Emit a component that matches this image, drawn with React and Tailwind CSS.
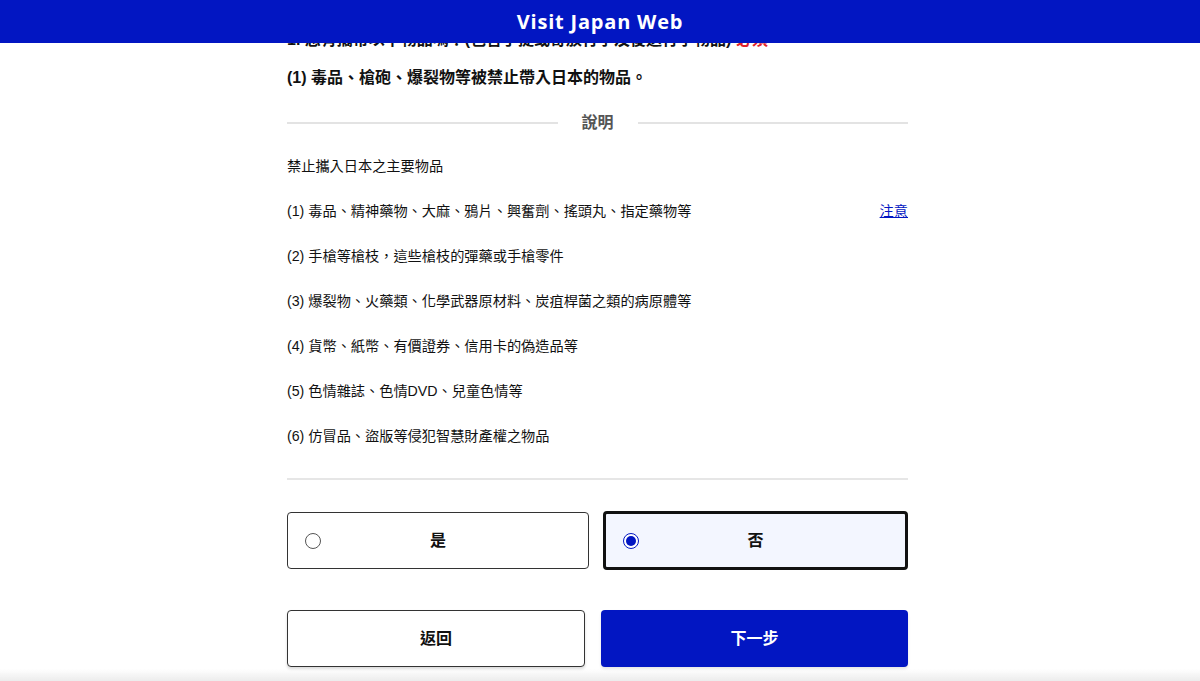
export default function App() {
  const items = [
    "(2) 手槍等槍枝，這些槍枝的彈藥或手槍零件",
    "(3) 爆裂物、火藥類、化學武器原材料、炭疽桿菌之類的病原體等",
    "(4) 貨幣、紙幣、有價證券、信用卡的偽造品等",
    "(5) 色情雜誌、色情DVD、兒童色情等",
    "(6) 仿冒品、盜版等侵犯智慧財產權之物品",
  ];
  const font = { fontFamily: '"Liberation Sans", "Noto Sans CJK TC", sans-serif' };
  return (
    <div className="relative min-h-[681px] bg-white text-[#111]" style={font}>
      <header className="fixed top-0 inset-x-0 z-10 h-[43px] bg-[#0216c2] flex items-center justify-center">
        <span className="text-white text-[20px] font-bold tracking-[0.8px]" style={{ fontFamily: '"Open Sans", sans-serif' }}>
          Visit Japan Web
        </span>
      </header>
      <main className="ml-[287px] w-[621px] pt-[28px] pb-[14px]">
        <p className="h-[24px] leading-[24px] text-[16px] font-bold">
          1. 您有攜帶以下物品嗎？(包含手提或寄放行李及後送行李物品) <span className="text-[#e0202a]">必須</span>
        </p>
        <h2 className="mt-[14px] h-[24px] leading-[24px] text-[16px] font-bold">
          (1) 毒品、槍砲、爆裂物等被禁止帶入日本的物品。
        </h2>
        <div className="mt-[21px] h-[24px] flex items-center">
          <div className="flex-1 h-[2px] bg-[#e3e3e3]" />
          <span className="px-[24px] text-[16px] font-bold text-[#555] leading-[24px]">說明</span>
          <div className="flex-1 h-[2px] bg-[#e3e3e3]" />
        </div>
        <div className="mt-[9px] text-[14.2px]">
          <div className="h-[45px] flex items-center">禁止攜入日本之主要物品</div>
          <div className="h-[45px] flex items-center justify-between">
            <span>(1) 毒品、精神藥物、大麻、鴉片、興奮劑、搖頭丸、指定藥物等</span>
            <a className="text-[#0216c2] underline">注意</a>
          </div>
          {items.map((t) => (
            <div key={t} className="h-[45px] flex items-center">{t}</div>
          ))}
        </div>
        <div className="mt-[19px] h-[2px] bg-[#e6e6e6]" />
        <div className="mt-[32px] flex justify-between">
          <div className="w-[302px] h-[57px] rounded-[4px] border border-[#333] bg-white flex items-center relative">
            <span className="absolute left-[17px] w-[16px] h-[16px] rounded-full border border-[#555] bg-white" />
            <span className="flex-1 text-center text-[16px] font-bold">是</span>
          </div>
          <div className="w-[305px] h-[59px] -mt-[1px] rounded-[4px] border-[3px] border-[#111] bg-[#f3f6ff] flex items-center relative">
            <span className="absolute left-[17px] w-[16px] h-[16px] rounded-full border border-[#0216c2] bg-white flex items-center justify-center">
              <span className="w-[10px] h-[10px] rounded-full bg-[#0216c2]" />
            </span>
            <span className="flex-1 text-center text-[16px] font-bold">否</span>
          </div>
        </div>
        <div className="mt-[40px] flex justify-between">
          <button className="w-[298px] h-[57px] rounded-[4px] border border-[#333] bg-white text-[16px] font-bold shadow-[0_2px_3px_rgba(0,0,0,0.15)]">
            返回
          </button>
          <button className="w-[307px] h-[57px] rounded-[4px] bg-[#0216c2] text-white text-[16px] font-bold shadow-[0_2px_3px_rgba(0,0,0,0.1)]">
            下一步
          </button>
        </div>
      </main>
      <div className="fixed bottom-0 inset-x-0 h-[12px] bg-gradient-to-t from-[#ececec] to-transparent pointer-events-none" />
    </div>
  );
}
